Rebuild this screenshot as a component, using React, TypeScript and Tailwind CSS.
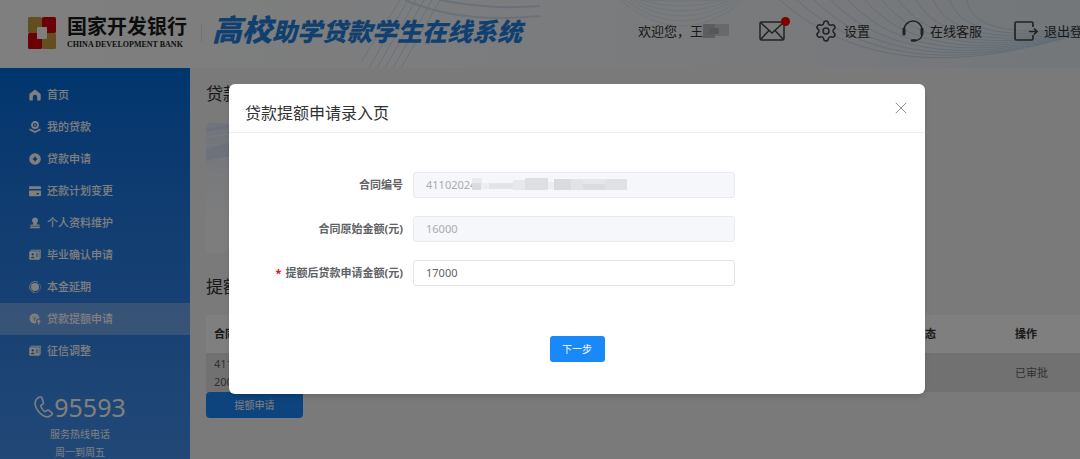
import type { ReactNode } from 'react';
import { Settings, X } from 'lucide-react';

const MENU: { label: string; icon: ReactNode; active?: boolean }[] = [
  { label: '首页', icon: <HomeIcon /> },
  { label: '我的贷款', icon: <LoanIcon /> },
  { label: '贷款申请', icon: <PlusIcon /> },
  { label: '还款计划变更', icon: <CardIcon /> },
  { label: '个人资料维护', icon: <UserIcon /> },
  { label: '毕业确认申请', icon: <IdIcon /> },
  { label: '本金延期', icon: <DelayIcon /> },
  { label: '贷款提额申请', icon: <RaiseIcon />, active: true },
  { label: '征信调整', icon: <IdIcon /> },
];

function HomeIcon() {
  return (
    <svg viewBox="0 0 12 12" className="size-3" fill="currentColor">
      <path d="M6 .4.3 5v5.600c0 .6.3.9.9.9h2.600V8a2.200 2.200 0 0 1 4.400 0v3.500h2.600c.6 0 .9-.3.9-.9V5z" />
    </svg>
  );
}

function LoanIcon() {
  return (
    <svg viewBox="0 0 12 12" className="size-3" fill="none" stroke="currentColor">
      <circle cx="6" cy="4" r="3" strokeWidth="1.800" />
      <circle cx="6" cy="4" r=".9" fill="currentColor" stroke="none" />
      <path d="M.5 8.200 6 11l5.500-2.800" strokeWidth="1.800" />
    </svg>
  );
}

function PlusIcon() {
  return (
    <svg viewBox="0 0 12 12" className="size-3">
      <circle cx="6" cy="6" r="5.800" fill="currentColor" />
      <path d="M6 3.800v4.400M3.800 6h4.400" stroke="#0a6cd8" strokeWidth="1.600" />
    </svg>
  );
}

function CardIcon() {
  return (
    <svg viewBox="0 0 12 12" className="size-3">
      <path d="M1 1.200h10q1 0 1 .8V4H0V2q0-.8 1-.8zM0 5.500h12v4.700q0 1-1 1H1q-1 0-1-1z" fill="currentColor" />
      <path d="M7.500 8.700H10" stroke="#0a6cd8" strokeWidth="1.400" />
    </svg>
  );
}

function UserIcon() {
  return (
    <svg viewBox="0 0 12 12" className="size-3" fill="currentColor">
      <path d="M6 .5a3 3 0 0 1 1.800 5.400L7.600 7.400h1.900q1.300 0 1.300 1.400H1.200q0-1.400 1.300-1.400h1.900L4.200 5.900A3 3 0 0 1 6 .5zM1.200 9.600h9.600v1.700H1.200z" />
    </svg>
  );
}

function IdIcon() {
  return (
    <svg viewBox="0 0 12 12" className="size-3">
      <path d="M1.500 1.200h10.300v8.300" fill="none" stroke="currentColor" />
      <rect x=".2" y="2.300" width="10.600" height="8.500" rx=".8" fill="currentColor" />
      <g stroke="#1770d6" fill="#1770d6">
        <circle cx="3.700" cy="5.400" r=".7" />
        <path d="M2 8.800q1.700-2 3.400 0z" strokeWidth=".5" />
        <path d="M6.800 5h2.500M6.800 7h2.500" strokeWidth=".8" />
      </g>
    </svg>
  );
}

function DelayIcon() {
  return (
    <svg viewBox="0 0 12 12" className="size-3">
      <circle cx="6" cy="6" r="4" fill="currentColor" />
      <path d="M9 1.300A5.500 5.500 0 1 0 6 11.500" fill="none" stroke="currentColor" strokeWidth=".9" />
      <path d="M7.500 11.300A5.500 5.500 0 0 0 10 2.200" fill="none" stroke="currentColor" strokeWidth=".9" strokeDasharray="1.200 1" />
    </svg>
  );
}

function RaiseIcon() {
  return (
    <svg viewBox="0 0 12 12" className="size-3">
      <path d="M5.500.5a5 5 0 0 1 5 5H8.500L7 7.500v2.800A5 5 0 1 1 5.500.5z" fill="currentColor" />
      <path d="M3.500 3l2 2.300L7.500 3M5.500 5.300v3M3.800 5.800h3.400" fill="none" stroke="#90b8e8" strokeWidth=".8" />
      <path d="M9.700 6.300 12 9h-1.500v2.500H9V9H7.500z" fill="currentColor" />
    </svg>
  );
}

function PhoneIcon() {
  return (
    <svg viewBox="0 0 20 22" className="h-[22px] w-5" fill="none" stroke="currentColor" strokeWidth="1.600" strokeLinejoin="round">
      <path d="M2.500 3.200C.2 6 .6 11 4.500 15.500s8.500 6.500 12 4.300c1.700-1.100 2.200-2.100 1.200-3.200l-2.400-2c-1-.9-2-.7-2.900.2-.8.9-1.400 1-2.300.3-1.800-1.500-2.600-3-3.200-4.600-.3-1 .2-1.500 1-1.800 1.400-.5 1.800-1.300 1.400-2.700L8.200 2.600C7.700 1 6.500.7 5 1.200c-1.100.4-1.900 1.100-2.500 2z" />
    </svg>
  );
}

function BankLogo() {
  return (
    <svg viewBox="0 0 30 34" className="h-[34px] w-[30px]">
      <rect x="1" y="1" width="14" height="16" rx="1.500" fill="#c99a3c" />
      <rect x="15" y="1" width="14" height="16" rx="1.500" fill="#d8000f" />
      <rect x="1" y="17" width="14" height="16" rx="1.500" fill="#d8000f" />
      <rect x="15" y="17" width="14" height="16" rx="1.500" fill="#c99a3c" />
      <rect x="10" y="11" width="10" height="12" rx="1" fill="#fff" />
    </svg>
  );
}

function HeaderWaves() {
  return (
    <svg
      viewBox="0 0 1154 68"
      preserveAspectRatio="xMinYMin slice"
      className="absolute inset-0 h-full w-full"
      fill="none"
      stroke="#9cc4e6"
      aria-hidden="true"
    >
      <g opacity=".4">
        {[0, 8, 16, 24, 32, 40].map((x) => (
          <path key={x} d={`M${361 + x} ${x < 8 ? 62 : 68}L${400 + x} 0`} />
        ))}
        <path d="M405 0Q460 24 540 16M440 0Q490 10 540 6" strokeWidth="2" />
      </g>
      <g opacity=".45">
        {[0, 5, 10, 15, 20, 25].map((r) => (
          <path key={r} d={`M${620 + r} 0Q680 ${52 - r * 2} ${745 - r} 0`} opacity=".5" />
        ))}
        {[0, 1, 2, 3, 4, 5, 6, 7, 8, 9, 10, 11].map((i) => (
          <path key={i} d={`M${780 + i * 17} 0C${850 + i * 11} ${62 - i * 3} ${960 + i * 5} ${88 - i * 4} 1154 ${i + 6}`} />
        ))}
      </g>
    </svg>
  );
}

function TopBar() {
  return (
    <header className="relative h-[68px] bg-linear-to-r from-white via-[#f6f8fb] to-[#e6edf4] text-[#333]">
      <HeaderWaves />
      <div className="relative flex h-full items-center justify-between pr-[58px] pb-0.5 pl-[27px]">
        <div className="flex items-center">
          <BankLogo />
          <div className="ml-2.5 flex flex-col">
            <span className="text-[20px] leading-6 font-bold whitespace-nowrap text-[#1a1a1a]">国家开发银行</span>
            <span className="font-['Liberation_Serif',serif] text-[8px] leading-3 font-bold whitespace-nowrap text-[#1a1a1a]">
              CHINA DEVELOPMENT BANK
            </span>
          </div>
          <span className="ml-3.5 h-[18px] w-px bg-[#e4e4e4]" />
          <h1 className="ml-2.5 flex items-baseline pb-1.5 font-black whitespace-nowrap text-[#1f80e0] italic">
            <span className="text-[30px] leading-8">高校</span>
            <span className="text-[25px] leading-8">助学贷款学生在线系统</span>
          </h1>
        </div>

        <nav className="flex items-center pb-1 text-[13px] leading-5 whitespace-nowrap">
          <span className="flex items-center">
            欢迎您，王
            <svg viewBox="0 0 26 14" className="h-3.5 w-[26px]" aria-hidden="true">
              <rect width="12" height="14" fill="#b8babc" />
              <rect x="12" width="14" height="12" fill="#d0d2d4" />
              <rect x="6" y="4" width="10" height="6" fill="#acaeb0" />
            </svg>
          </span>
          <button type="button" aria-label="消息" className="relative ml-[29px]">
            <svg viewBox="0 0 28 20" className="h-5 w-7" fill="none" stroke="#444" strokeWidth="1.500">
              <rect x="2" y="1" width="24" height="18" rx="1.500" />
              <path d="m3 2 11 10L25 2M3 18l8-8.500M25 18l-8-8.500" />
            </svg>
            <span className="absolute -top-1 -right-1 size-[9px] rounded-full bg-[#f00]" />
          </button>
          <a href="#settings" className="ml-7 flex items-center gap-1.5">
            <Settings className="size-6 text-[#444]" strokeWidth={1.5} />
            设置
          </a>
          <a href="#service" className="ml-8 flex items-center gap-1.5">
            <svg viewBox="0 0 22 22" className="size-[22px]" fill="none" stroke="#444" strokeWidth="1.500">
              <path d="M2 11V10a9 9 0 0 1 18 0v1M20 14c0 4-3 6.500-8 6.500" />
              <path d="M2 9v5M20 9v5" strokeWidth="3" strokeLinecap="round" />
              <path d="M10 20.500h3" strokeWidth="2.500" strokeLinecap="round" />
            </svg>
            在线客服
          </a>
          <a href="#logout" className="ml-8 flex items-center gap-1.5">
            <svg viewBox="0 0 24 20" className="h-5 w-6" fill="none" stroke="#444" strokeWidth="1.700">
              <path d="M19 6V2.500Q19 1 17.500 1h-15Q1 1 1 2.500v15Q1 19 2.500 19h15q1.500 0 1.500-1.500V14M15 10.500h8M20 7.500l3 3-3 3" />
            </svg>
            退出登录
          </a>
        </nav>
      </div>
    </header>
  );
}

function Sidebar() {
  return (
    <aside className="w-[190px] shrink-0 bg-linear-to-b from-[#006cdc] to-[#4290ee] pt-[11px] text-white">
      <nav>
        {MENU.map((item) => (
          <a
            key={item.label}
            href="#menu"
            className={`flex h-8 items-center gap-1.5 pl-[29px] text-[11px] font-medium ${item.active ? 'bg-white/30' : ''}`}
          >
            {item.icon}
            {item.label}
          </a>
        ))}
      </nav>
      <div className="mt-6 flex flex-col items-center pr-[30px]">
        <div className="flex items-center text-[25px] leading-8">
          <PhoneIcon />
          95593
        </div>
        <p className="mt-0.5 text-[10px] leading-[18px]">服务热线电话</p>
        <p className="text-[10px] leading-[18px]">周一到周五</p>
      </div>
    </aside>
  );
}

function LoanPage() {
  return (
    <main className="min-w-0 flex-1 bg-[#f4f4f4] px-4 pt-3 pb-10 text-[#333]">
      <h2 className="text-[17px] leading-7">贷款信息</h2>
      <section className="mt-[15px] h-[130px] w-[360px] overflow-hidden rounded-sm bg-[#fafafa]">
        <svg viewBox="0 0 360 130" className="h-full w-full" aria-hidden="true">
          <defs>
            <linearGradient id="card-fade" x1="0" y1="0" x2="0" y2="1">
              <stop offset="0" stopColor="#e2ebf8" />
              <stop offset=".7" stopColor="#fafafa" />
            </linearGradient>
          </defs>
          <rect width="360" height="130" fill="url(#card-fade)" />
          <path d="M0 6 30 0H360V10L40 2 0 9zM0 26 20 20 60 26V44L20 34 0 40z" fill="#c3d8f3" opacity=".4" />
          <path d="M0 14 50 8M0 38 50 30M0 50 50 58" stroke="#fff" strokeWidth="1" opacity=".6" />
        </svg>
      </section>

      <h2 className="mt-5 text-[17px] leading-7">提额申请</h2>
      <table className="mt-3.5 w-full table-fixed text-left text-[11px] leading-[18px]">
        <colgroup>
          <col />
          <col />
          <col className="w-[123px]" />
          <col className="w-[131px]" />
        </colgroup>
        <thead>
          <tr className="h-[38px] bg-[#fefefe]">
            <th className="px-2">合同编号</th>
            <th className="px-2">申请金额</th>
            <th className="px-2">审核状态</th>
            <th className="px-2">操作</th>
          </tr>
        </thead>
        <tbody>
          <tr className="h-[39px] bg-[#e2e2e2] text-[#606266]">
            <td className="px-2">
              41102024
              <br />
              2000
            </td>
            <td className="px-2">17000</td>
            <td className="px-2" />
            <td className="px-2">已审批</td>
          </tr>
        </tbody>
      </table>
      <button type="button" className="block h-[26px] w-[97px] rounded-sm bg-[#1a88fa] text-[10px] text-white">
        提额申请
      </button>
    </main>
  );
}

interface FieldProps {
  id: string;
  label: string;
  value: string;
  disabled?: boolean;
  required?: boolean;
  children?: ReactNode;
}

function Field({ id, label, value, disabled, required, children }: FieldProps) {
  return (
    <div className="flex items-center gap-2.5">
      <label htmlFor={id} className="w-[174px] shrink-0 text-right text-[11px] font-bold whitespace-nowrap text-[#606266]">
        {required && <span className="mr-1 text-[#f00]">*</span>}
        {label}
      </label>
      <div className="relative flex-1">
        <input
          id={id}
          defaultValue={value}
          disabled={disabled}
          required={required}
          className="block h-[26px] w-full rounded-[3px] border border-[#e2e4ea] bg-white px-3 pb-0.5 text-[11px] text-[#606266] disabled:border-[#e8ebf0] disabled:bg-[#f5f7fa] disabled:text-[#a8abb2]"
        />
        {children}
      </div>
    </div>
  );
}

// Hides the rest of the contract number
function NumberMask() {
  return (
    <svg viewBox="0 0 158 20" className="absolute top-[3px] left-[59px] h-5 w-[158px]" aria-hidden="true">
      <rect width="158" height="20" fill="#f5f7fa" />
      <rect y="3" width="10" height="5" fill="#e8eaed" />
      <rect y="8" width="9" height="7" fill="#d9dbde" />
      <rect x="9" y="8" width="8" height="6" fill="#eceef1" />
      <rect x="17" y="8" width="24" height="6" fill="#e2e4e7" />
      <rect x="41" y="5" width="12" height="10" fill="#e6e8eb" />
      <rect x="53" y="3" width="23" height="12" fill="#dddfe2" />
      <rect x="76" y="7" width="6" height="7" fill="#eceef1" />
      <rect x="82" y="4" width="17" height="11" fill="#d9dbde" />
      <rect x="99" y="4" width="12" height="11" fill="#e1e3e6" />
      <rect x="111" y="4" width="22" height="5" fill="#e4e6e9" />
      <rect x="111" y="9" width="22" height="6" fill="#dadcdf" />
      <rect x="133" y="4" width="22" height="11" fill="#dfe1e4" />
    </svg>
  );
}

function RaiseDialog() {
  return (
    <div className="absolute inset-0 flex items-start justify-center bg-black/50 pt-[84px]">
      <div role="dialog" aria-labelledby="dialog-title" className="w-[696px] rounded-md bg-white shadow-md">
        <div className="flex h-[49px] items-center justify-between border-b border-[#ebeef5] pr-3.5 pl-4">
          <h2 id="dialog-title" className="pt-2.5 text-[16px] leading-6 text-[#303133]">
            贷款提额申请录入页
          </h2>
          <button type="button" aria-label="关闭" className="text-[#909399]">
            <X className="size-5" strokeWidth={1.2} />
          </button>
        </div>
        <form className="pt-[39px] pb-8" onSubmit={(e) => e.preventDefault()}>
          <div className="flex flex-col gap-[18px] pr-[190px]">
            <Field id="contract" label="合同编号" value="41102024" disabled>
              <NumberMask />
            </Field>
            <Field id="original" label="合同原始金额(元)" value="16000" disabled />
            <Field id="raised" label="提额后贷款申请金额(元)" value="17000" required />
          </div>
          <div className="mt-[50px] flex justify-center">
            <button type="submit" className="h-[26px] w-[55px] rounded-[3px] bg-[#1989fa] text-[10px] text-white">
              下一步
            </button>
          </div>
        </form>
      </div>
    </div>
  );
}

export default function App() {
  return (
    <div className="overflow-hidden font-['Noto_Sans','Noto_Sans_CJK_SC',sans-serif]">
      <div className="relative flex min-h-screen min-w-[1154px] flex-col">
        <TopBar />
        <div className="flex flex-1">
          <Sidebar />
          <LoanPage />
        </div>
        <RaiseDialog />
      </div>
    </div>
  );
}
